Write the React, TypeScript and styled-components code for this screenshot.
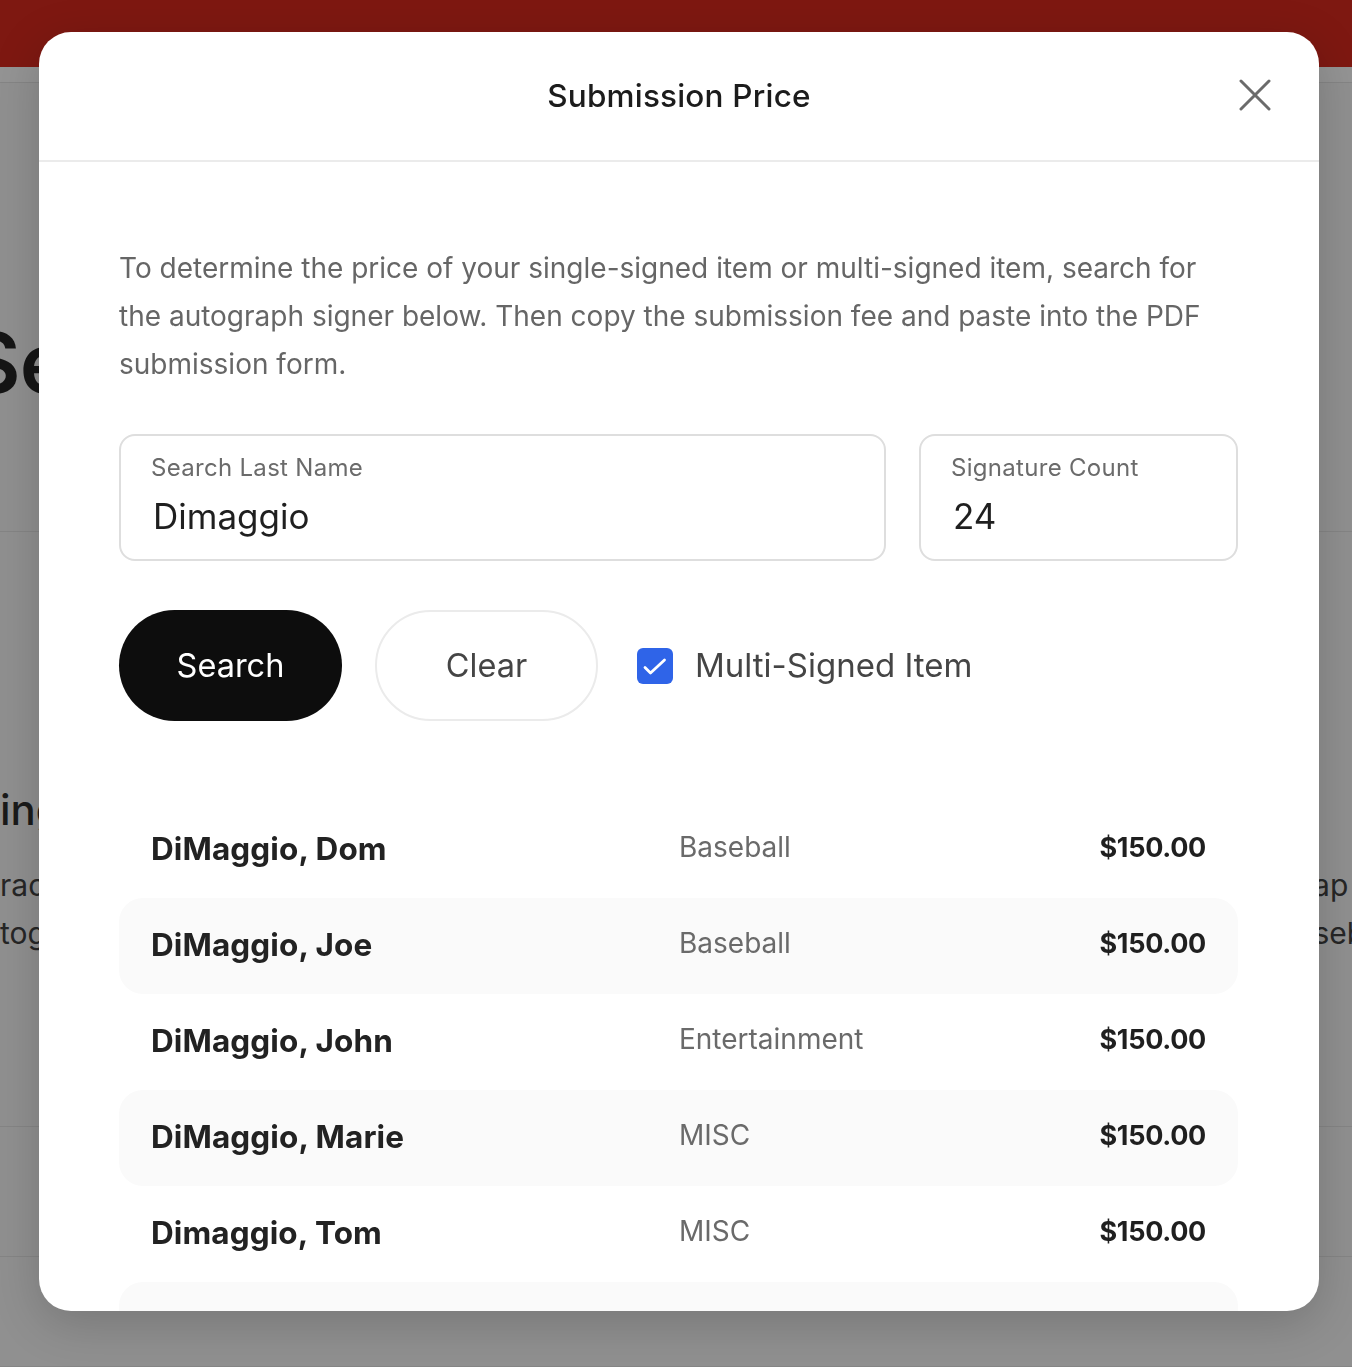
import React from "react";
import styled, { createGlobalStyle } from "styled-components";

const GlobalStyle = createGlobalStyle`
  html, body { margin: 0; padding: 0; }
  body {
    font-family: Inter, "Noto Sans", Arial, sans-serif;
    background: #909090;
    overflow: hidden;
  }
  * { box-sizing: border-box; }
`;

/* ---------- background page (under the dimmed overlay) ---------- */

const Page = styled.div`
  height: 1367px;
  overflow: hidden;
  background: #909090;
  display: flex;
  flex-direction: column;
`;

const TopBar = styled.div`
  height: 67px;
  flex-shrink: 0;
  background: #7e1811;
`;

const SubNav = styled.div`
  height: 16px;
  flex-shrink: 0;
  background: #949494;
  border-bottom: 1px solid #858585;
`;

const Hero = styled.section`
  height: 449px;
  flex-shrink: 0;
  display: flex;
  align-items: center;
  border-bottom: 1px solid #858585;
  padding-top: 110px;
`;

const HeroTitle = styled.h1`
  margin: 0 0 0 -34px;
  font-size: 84px;
  font-weight: 600;
  color: #151515;
  letter-spacing: -1px;
  white-space: nowrap;
`;

const Features = styled.section`
  height: 595px;
  flex-shrink: 0;
  display: grid;
  grid-template-columns: 1312px 1fr;
  border-bottom: 1px solid #858585;
  padding-top: 252px;
  overflow: hidden;
`;

const FeatureCol = styled.div`
  display: flex;
  flex-direction: column;
  white-space: nowrap;
`;

const FeatureTitle = styled.h2`
  margin: 0 0 17px 0;
  height: 60px;
  font-size: 42px;
  font-weight: 500;
  color: #1a1a1a;
`;

const FeatureLine = styled.p<{ $shift?: number }>`
  margin: 0 0 0 ${(p) => p.$shift ?? 0}px;
  font-size: 30px;
  line-height: 48px;
  color: #262626;
`;

const Band = styled.section<{ $h: number }>`
  height: ${(p) => p.$h}px;
  flex-shrink: 0;
  border-bottom: 1px solid #858585;
`;

/* ---------- modal ---------- */

const Overlay = styled.div`
  position: fixed;
  inset: 0;
  padding: 32px 33px 0 39px;
  display: flex;
  align-items: flex-start;
`;

const Modal = styled.div`
  width: 1280px;
  height: 1279px;
  background: #ffffff;
  border-radius: 32px;
  overflow: hidden;
  display: flex;
  flex-direction: column;
  box-shadow: 0 12px 48px rgba(0, 0, 0, 0.18);
`;

const Header = styled.header`
  height: 130px;
  flex-shrink: 0;
  display: grid;
  grid-template-columns: 1fr auto 1fr;
  align-items: center;
  border-bottom: 2px solid #ebebeb;
  padding: 0 48px 2px 48px;
`;

const Title = styled.h2`
  grid-column: 2;
  margin: 0;
  font-size: 31.5px;
  font-weight: 500;
  color: #1c1c1c;
  letter-spacing: 0.2px;
`;

const CloseButton = styled.button`
  grid-column: 3;
  justify-self: end;
  width: 32px;
  height: 32px;
  padding: 0;
  border: none;
  background: transparent;
  cursor: pointer;
  display: flex;
  align-items: center;
  justify-content: center;
`;

const Body = styled.div`
  flex: 1;
  overflow: hidden;
  padding: 82px 81px 0 80px;
`;

const Intro = styled.p`
  margin: 0;
  font-size: 28px;
  line-height: 48px;
  color: #666666;
  letter-spacing: 0;
`;

const Fields = styled.div`
  margin-top: 46px;
  display: grid;
  grid-template-columns: 767px 1fr;
  gap: 33px;
`;

const Field = styled.label`
  height: 127px;
  border: 2px solid #dedede;
  border-radius: 16px;
  padding: 18px 30px 0 30px;
  display: flex;
  flex-direction: column;
  gap: 13px;
`;

const FieldLabel = styled.span`
  font-size: 24px;
  line-height: 28px;
  color: #6b6b6b;
  letter-spacing: 0.3px;
`;

const FieldValue = styled.span`
  font-size: 35px;
  line-height: 42px;
  color: #1f1f1f;
  padding-left: 2px;
`;

const Actions = styled.div`
  margin-top: 49px;
  display: flex;
  align-items: center;
  gap: 33px;
`;

const PillButton = styled.button<{ $primary?: boolean }>`
  width: 223px;
  height: 111px;
  border-radius: 56px;
  font-family: inherit;
  font-size: 32.5px;
  font-weight: 400;
  cursor: pointer;
  padding: 0;
  background: ${(p) => (p.$primary ? "#0d0d0d" : "#ffffff")};
  color: ${(p) => (p.$primary ? "#ffffff" : "#454545")};
  border: ${(p) => (p.$primary ? "none" : "2px solid #ebebeb")};
`;

const CheckLabel = styled.label`
  margin-left: 6px;
  display: flex;
  align-items: center;
  gap: 22px;
  font-size: 33px;
  color: #454545;
  padding-bottom: 2px;
`;

const CheckBox = styled.span`
  width: 36px;
  height: 36px;
  border-radius: 6px;
  background: #2f64e8;
  display: flex;
  align-items: center;
  justify-content: center;
  margin-top: 2px;
`;

const Results = styled.div`
  margin-top: 81px;
  display: flex;
  flex-direction: column;
`;

const Row = styled.div<{ $striped?: boolean }>`
  height: 96px;
  flex-shrink: 0;
  display: grid;
  grid-template-columns: 528px 1fr auto;
  align-items: center;
  padding: 0 32px 6px 32px;
  border-radius: 24px;
  background: ${(p) => (p.$striped ? "#fafafa" : "transparent")};
`;

const Name = styled.span`
  font-size: 31.5px;
  font-weight: 700;
  color: #222222;
  letter-spacing: 0.1px;
  padding-top: 3px;
`;

const Category = styled.span`
  font-size: 28px;
  color: #6a6a6a;
`;

const Price = styled.span`
  font-size: 27px;
  font-weight: 700;
  color: #1f1f1f;
  letter-spacing: -0.3px;
`;

const results = [
  { name: "DiMaggio, Dom", category: "Baseball", price: "$150.00" },
  { name: "DiMaggio, Joe", category: "Baseball", price: "$150.00" },
  { name: "DiMaggio, John", category: "Entertainment", price: "$150.00" },
  { name: "DiMaggio, Marie", category: "MISC", price: "$150.00" },
  { name: "Dimaggio, Tom", category: "MISC", price: "$150.00" },
  { name: "DiMaggio, Vince", category: "Baseball", price: "$150.00" },
];

export default function App() {
  return (
    <>
      <GlobalStyle />
      <Page>
        <TopBar />
        <SubNav />
        <Hero>
          <HeroTitle>Services</HeroTitle>
        </Hero>
        <Features>
          <FeatureCol>
            <FeatureTitle>ing Services</FeatureTitle>
            <FeatureLine>rack your autographs</FeatureLine>
            <FeatureLine>tographs and memorabilia</FeatureLine>
          </FeatureCol>
          <FeatureCol>
            <FeatureTitle />
            <FeatureLine $shift={-26}>Map</FeatureLine>
            <FeatureLine $shift={-34}>baseball</FeatureLine>
          </FeatureCol>
        </Features>
        <Band $h={130} />
        <Band $h={110} />
      </Page>

      <Overlay>
        <Modal role="dialog" aria-label="Submission Price">
          <Header>
            <Title>Submission Price</Title>
            <CloseButton aria-label="Close">
              <svg width="32" height="32" viewBox="0 0 32 32" fill="none">
                <path
                  d="M2 2 L30 30 M30 2 L2 30"
                  stroke="#6b6b6b"
                  strokeWidth="3"
                  strokeLinecap="round"
                />
              </svg>
            </CloseButton>
          </Header>
          <Body>
            <Intro>
              To determine the price of your single-signed item or multi-signed item, search for the
              autograph signer below. Then copy the submission fee and paste into the PDF submission
              form.
            </Intro>
            <Fields>
              <Field>
                <FieldLabel>Search Last Name</FieldLabel>
                <FieldValue>Dimaggio</FieldValue>
              </Field>
              <Field>
                <FieldLabel>Signature Count</FieldLabel>
                <FieldValue>24</FieldValue>
              </Field>
            </Fields>
            <Actions>
              <PillButton $primary>Search</PillButton>
              <PillButton>Clear</PillButton>
              <CheckLabel>
                <CheckBox>
                  <svg width="36" height="36" viewBox="0 0 36 36" fill="none">
                    <path
                      d="M8 19.5 L13.5 25 L27.5 12"
                      stroke="#ffffff"
                      strokeWidth="2.8"
                      strokeLinecap="round"
                      strokeLinejoin="round"
                    />
                  </svg>
                </CheckBox>
                Multi-Signed Item
              </CheckLabel>
            </Actions>
            <Results>
              {results.map((r, i) => (
                <Row key={r.name} $striped={i % 2 === 1}>
                  <Name>{r.name}</Name>
                  <Category>{r.category}</Category>
                  <Price>{r.price}</Price>
                </Row>
              ))}
            </Results>
          </Body>
        </Modal>
      </Overlay>
    </>
  );
}
